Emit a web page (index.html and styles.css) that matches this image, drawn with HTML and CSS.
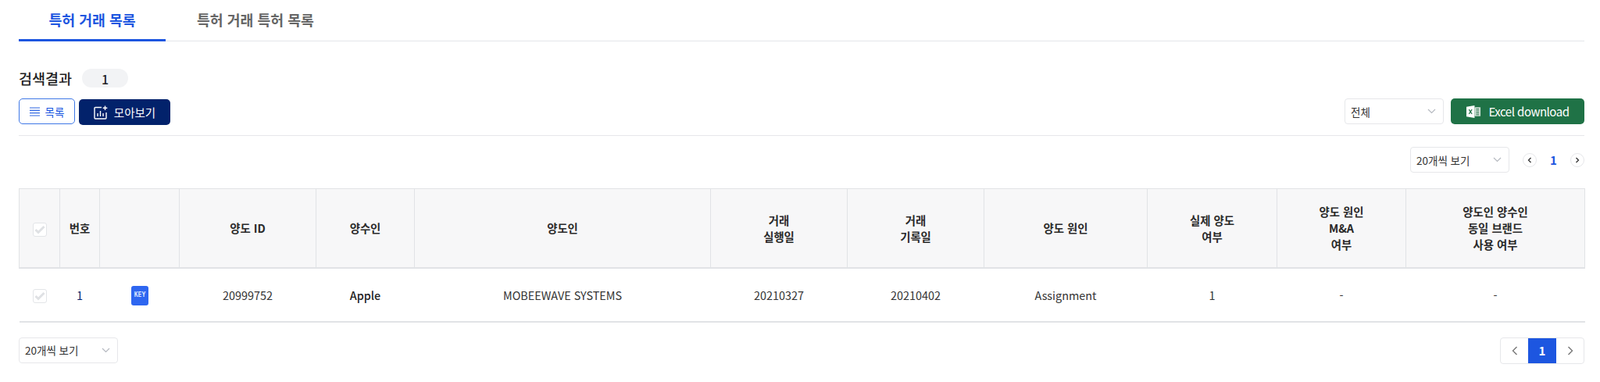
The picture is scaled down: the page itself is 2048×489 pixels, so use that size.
FILE: index.html
```html
<!DOCTYPE html>
<html lang="ko">
<head>
  <meta charset="UTF-8" />
  <title>특허 거래 목록</title>
  <link rel="stylesheet" href="styles.css">
</head>
<body>

  <nav class="tabs">
    <a class="tab active">특허 거래 목록</a>
    <a class="tab">특허 거래 특허 목록</a>
  </nav>

  <div class="result">
    <strong>검색결과</strong>
    <span class="count">1</span>
  </div>

  <div class="toolbar">
    <div class="group">
      <button class="btn btn-list">
        <svg width="13" height="14" viewBox="0 0 13 14" fill="none" stroke="#2f66e2" stroke-width="1.2"><path d="M0 2h13M0 5.300h13M0 8.600h13M0 12h13"/></svg>
        목록
      </button>
      <button class="btn btn-gallery">
        <svg width="18" height="18" viewBox="0 0 18 18" fill="none" stroke="#fff" stroke-width="1.4"><path d="M10 2.500H2a1 1 0 0 0-1 1V16a1 1 0 0 0 1 1h13a1 1 0 0 0 1-1V9"/><path d="M5 14V10M8.500 14V7M12 14V10M14.500 0.500V6M11.700 3.200H17.300"/></svg>
        모아보기
      </button>
    </div>
    <div class="group">
      <div class="select select-all">전체<svg class="caret" width="11" height="7" viewBox="0 0 11 7" fill="none" stroke="#b5b9c0" stroke-width="1.2"><path d="M1 1l4.500 4.500L10 1"/></svg></div>
      <button class="btn btn-excel">
        <svg width="19" height="18" viewBox="0 0 20 18"><path d="M0 2.500L11 0.500V17.500L0 15.500Z" fill="#fff"/><path d="M11 3h8v12h-8z" fill="#cfe0d6"/><path d="M13 5.500h4M13 8h4M13 10.500h4M13 13h4" stroke="#1f7246" stroke-width="1"/><path d="M3.500 6l4 6M7.500 6l-4 6" stroke="#1f7246" stroke-width="1.300"/></svg>
        Excel download
      </button>
    </div>
  </div>

  <div class="top-paging">
    <div class="select select-size">20개씩 보기<svg class="caret" width="11" height="7" viewBox="0 0 11 7" fill="none" stroke="#b5b9c0" stroke-width="1.2"><path d="M1 1l4.500 4.500L10 1"/></svg></div>
    <div class="mini-pager">
      <span class="circle"><svg width="6" height="8" viewBox="0 0 6 8" fill="none" stroke="#333" stroke-width="1.3"><path d="M4.500 1L1.500 4l3 3"/></svg></span>
      <b>1</b>
      <span class="circle"><svg width="6" height="8" viewBox="0 0 6 8" fill="none" stroke="#333" stroke-width="1.3"><path d="M1.500 1l3 3-3 3"/></svg></span>
    </div>
  </div>

  <table class="list">
    <colgroup>
      <col class="c1"><col class="c2"><col class="c3"><col class="c4"><col class="c5"><col class="c6">
      <col class="c7"><col class="c8"><col class="c9"><col class="c10"><col class="c11"><col class="c12">
    </colgroup>
    <thead>
      <tr>
        <th><span class="check"><svg width="14" height="12" viewBox="0 0 14 12" fill="none" stroke="#dfe1e4" stroke-width="3"><path d="M1.500 6l3.500 3.500L12.500 2"/></svg></span></th>
        <th>번호</th>
        <th></th>
        <th>양도 ID</th>
        <th>양수인</th>
        <th>양도인</th>
        <th>거래<br>실행일</th>
        <th>거래<br>기록일</th>
        <th>양도 원인</th>
        <th>실제 양도<br>여부</th>
        <th>양도 원인<br>M&amp;A<br>여부</th>
        <th>양도인 양수인<br>동일 브랜드<br>사용 여부</th>
      </tr>
    </thead>
    <tbody>
      <tr>
        <td><span class="check"><svg width="14" height="12" viewBox="0 0 14 12" fill="none" stroke="#dfe1e4" stroke-width="3"><path d="M1.500 6l3.500 3.500L12.500 2"/></svg></span></td>
        <td class="num">1</td>
        <td><span class="key">KEY</span></td>
        <td>20999752</td>
        <td class="name">Apple</td>
        <td>MOBEEWAVE SYSTEMS</td>
        <td>20210327</td>
        <td>20210402</td>
        <td>Assignment</td>
        <td>1</td>
        <td>-</td>
        <td>-</td>
      </tr>
    </tbody>
  </table>

  <div class="bottom-paging">
    <div class="select select-size">20개씩 보기<svg class="caret" width="11" height="7" viewBox="0 0 11 7" fill="none" stroke="#b5b9c0" stroke-width="1.2"><path d="M1 1l4.500 4.500L10 1"/></svg></div>
    <div class="pager">
      <span><svg width="8" height="12" viewBox="0 0 8 12" fill="none" stroke="#777" stroke-width="1.4"><path d="M6.500 1L1.500 6l5 5"/></svg></span>
      <span class="on">1</span>
      <span><svg width="8" height="12" viewBox="0 0 8 12" fill="none" stroke="#777" stroke-width="1.4"><path d="M1.500 1l5 5-5 5"/></svg></span>
    </div>
  </div>

</body>
</html>
```

FILE: styles.css
```css
* {
  box-sizing: border-box;
}

body {
  margin: 0;
  padding: 0 20px 0 24px;
  height: 489px;
  overflow: hidden;
  background: #fff;
  color: #222;
  font-family: "Noto Sans CJK KR", "Noto Sans", sans-serif;
  font-size: 14px;
}

.tabs {
  display: flex;
  height: 53px;
  border-bottom: 1px solid #e4e6ea;
}

.tab {
  width: 188px;
  height: 53px;
  padding-top: 11px;
  margin-right: 40px;
  text-align: center;
  font-size: 18.300px;
  line-height: 28px;
  font-weight: 700;
  color: #666;
}

.tab.active {
  color: #1d56e0;
  border-bottom: 3px solid #1d56e0;
}

.tab + .tab {
  width: auto;
  margin: 0;
}

.result {
  display: flex;
  align-items: center;
  height: 24px;
  margin-top: 35px;
}

.result strong {
  font-size: 18.500px;
  font-weight: 500;
  color: #222;
}

.count {
  width: 59px;
  height: 24px;
  margin-left: 13px;
  border-radius: 12px;
  background: #f2f3f5;
  text-align: center;
  line-height: 26px;
  font-size: 16px;
  font-weight: 500;
}

.toolbar {
  display: flex;
  justify-content: space-between;
  height: 48px;
  margin-top: 14px;
  border-bottom: 1px solid #e6e7ea;
}

.group {
  display: flex;
  gap: 9px;
}

.btn {
  display: flex;
  align-items: center;
  justify-content: center;
  height: 33px;
  border-radius: 5px;
  border: 0;
  font-family: inherit;
  font-size: 14.500px;
}

.btn-list {
  width: 72px;
  gap: 7px;
  margin-right: -4px;
  border: 1px solid #3f78e6;
  background: #fff;
  color: #1d56e0;
  font-size: 13.500px;
}

.btn-gallery {
  width: 117px;
  gap: 8px;
  margin-top: 1px;
  background: #02226b;
  color: #fff;
}

.btn-excel {
  width: 171px;
  gap: 10px;
  background: #1f7246;
  color: #fff;
  font-size: 15px;
  letter-spacing: -0.5px;
}

.select {
  display: flex;
  align-items: center;
  justify-content: space-between;
  height: 33px;
  padding: 0 9px 0 7px;
  border: 1px solid #e6e7ea;
  border-radius: 4px;
  background: #fff;
  font-size: 13.500px;
  color: #333;
}

.select-all {
  width: 127px;
}

.select-size {
  width: 127px;
}

.top-paging {
  display: flex;
  justify-content: flex-end;
  align-items: center;
  height: 33px;
  margin-top: 14px;
}

.mini-pager {
  display: flex;
  align-items: center;
  width: 79px;
  margin-left: 17px;
  justify-content: space-between;
}

.mini-pager b {
  color: #1d56e0;
  font-weight: 700;
  font-size: 15px;
}

.circle {
  display: flex;
  align-items: center;
  justify-content: center;
  width: 18px;
  height: 18px;
  border: 1px solid #e6e7ea;
  border-radius: 50%;
}

.list {
  width: 2004px;
  margin-top: 20px;
  border-collapse: collapse;
  table-layout: fixed;
  border-bottom: 2px solid #e1e3e6;
}

.c1 { width: 52px; }
.c2 { width: 51px; }
.c3 { width: 102px; }
.c4 { width: 175px; }
.c5 { width: 126px; }
.c6 { width: 379px; }
.c7 { width: 175px; }
.c8 { width: 175px; }
.c9 { width: 209px; }
.c10 { width: 166px; }
.c11 { width: 165px; }
.c12 { width: 229px; }

.list th {
  height: 101px;
  padding: 0;
  background: #f7f7f8;
  border: 1px solid #e1e3e6;
  border-bottom-width: 2px;
  font-size: 14.400px;
  line-height: 21px;
  font-weight: 700;
  color: #2a2a2a;
}

.list td {
  height: 69px;
  padding: 0;
  text-align: center;
  font-size: 14.400px;
  color: #333;
}

.list .name {
  font-weight: 500;
  color: #222;
}

.list .num {
  color: #02226b;
}

.check {
  display: inline-flex;
  align-items: center;
  justify-content: center;
  width: 18px;
  height: 18px;
  vertical-align: middle;
  border: 1px solid #e3e5e8;
  border-radius: 3px;
  background: #fff;
}

.key {
  display: inline-block;
  width: 22px;
  height: 25px;
  margin: 2px 0 0 1px;
  border-radius: 3px;
  background: #2e66f0;
  color: #dbe6ff;
  font-family: "DejaVu Sans Mono", monospace;
  font-size: 8px;
  font-weight: 700;
  line-height: 24px;
  text-align: center;
  vertical-align: middle;
}

.bottom-paging {
  display: flex;
  justify-content: space-between;
  margin-top: 19px;
}

.pager {
  display: flex;
  width: 108px;
  height: 34px;
  border: 1px solid #e6e7ea;
  border-radius: 4px;
  overflow: hidden;
}

.pager span {
  flex: 1;
  display: flex;
  align-items: center;
  justify-content: center;
}

.pager .on {
  flex: none;
  width: 36px;
  background: #1d56e0;
  color: #fff;
  font-weight: 700;
  font-size: 15px;
}
```
